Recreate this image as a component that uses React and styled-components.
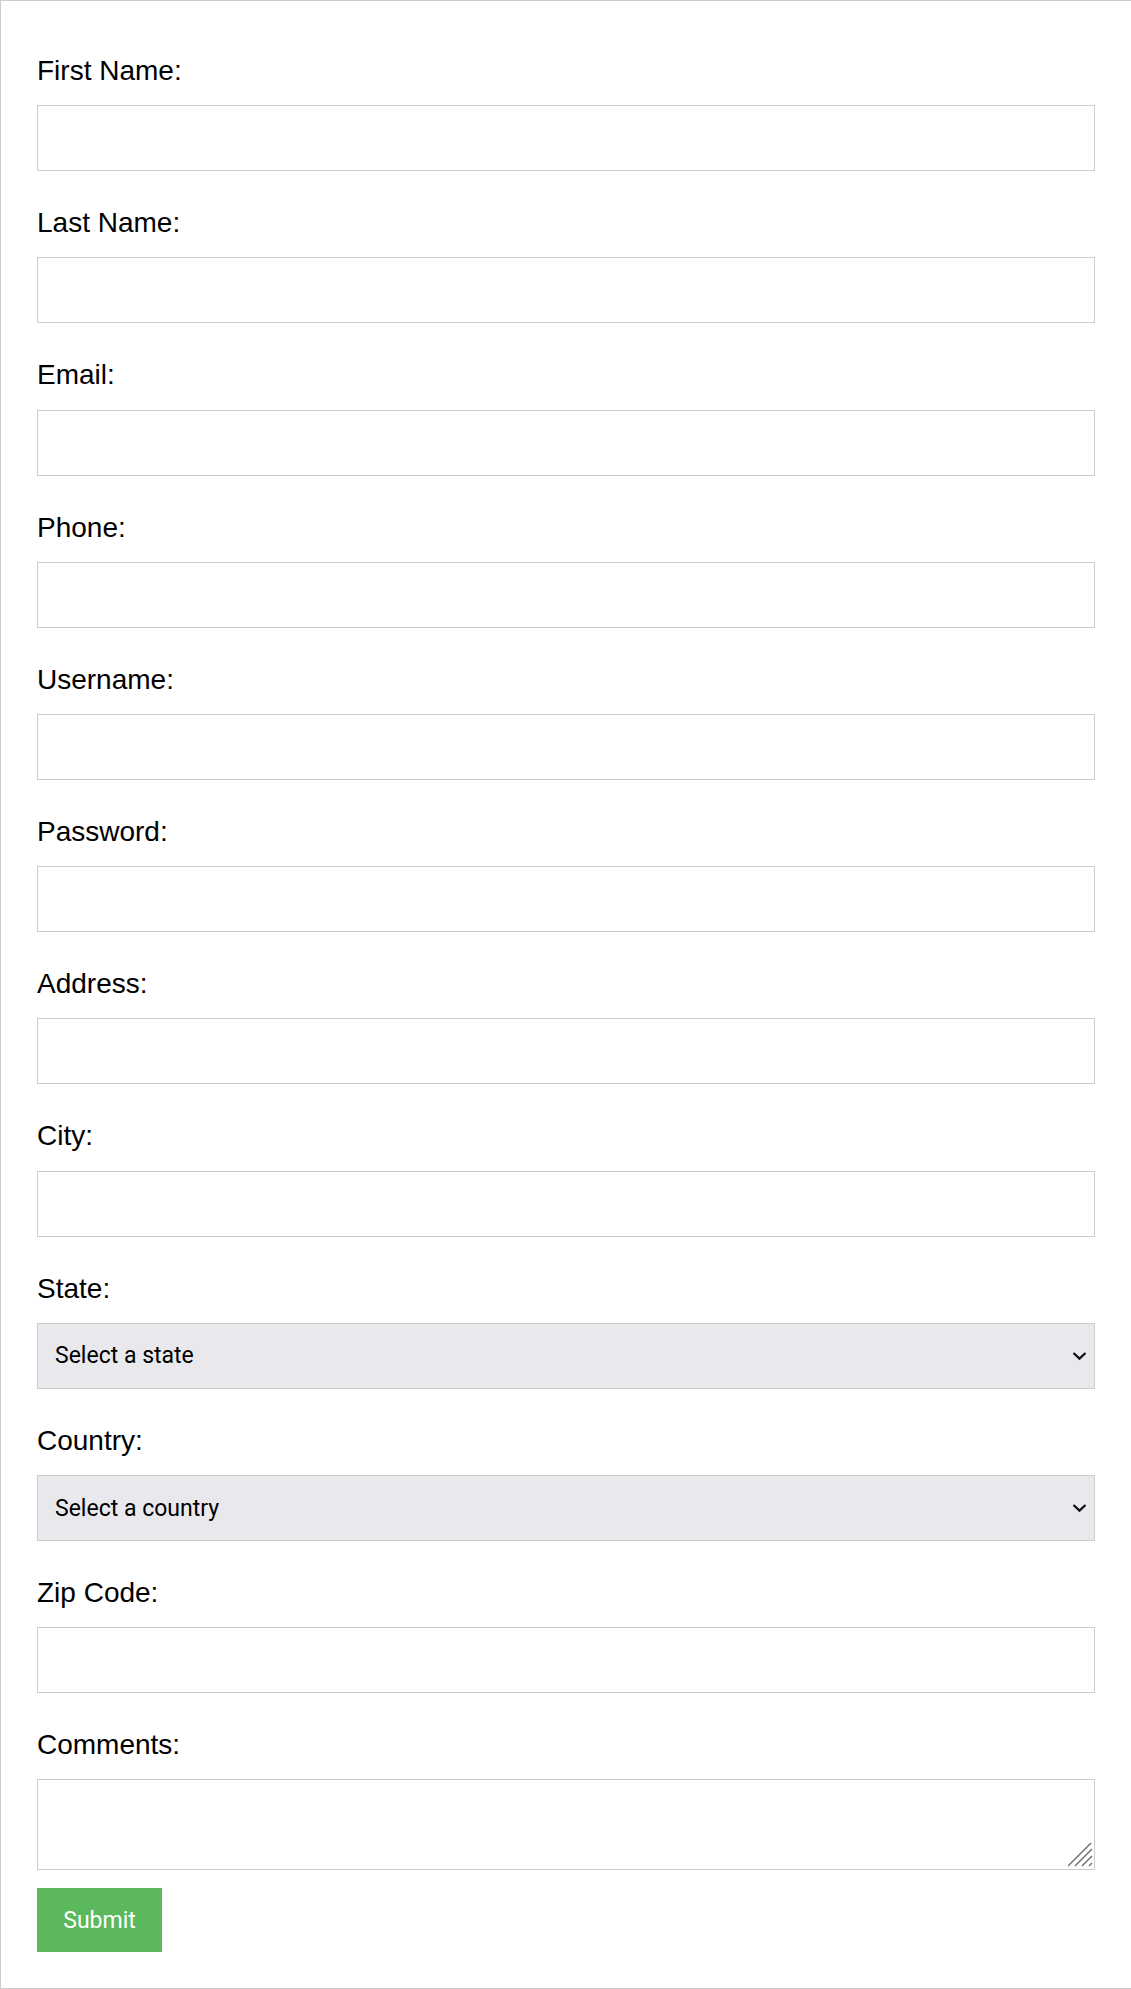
import React from "react";
import styled, { createGlobalStyle } from "styled-components";

const fields = [
  { name: "firstName", label: "First Name:", type: "text" },
  { name: "lastName", label: "Last Name:", type: "text" },
  { name: "email", label: "Email:", type: "email" },
  { name: "phone", label: "Phone:", type: "tel" },
  { name: "username", label: "Username:", type: "text" },
  { name: "password", label: "Password:", type: "password" },
  { name: "address", label: "Address:", type: "text" },
  { name: "city", label: "City:", type: "text" },
  { name: "state", label: "State:", select: "Select a state" },
  { name: "country", label: "Country:", select: "Select a country" },
  { name: "zip", label: "Zip Code:", type: "text" },
];

const App = () => {
  return (
    <>
      <GlobalStyle />
      <Wrapper>
        <Form onSubmit={(e) => e.preventDefault()}>
          {fields.map((field) => (
            <FormGroup key={field.name}>
              <FormLabel htmlFor={field.name}>{field.label}</FormLabel>
              {field.select ? (
                <FieldContainer>
                  <Select id={field.name} defaultValue="">
                    <option value="">{field.select}</option>
                  </Select>
                  <Chevron width="15" height="9" viewBox="0 0 15 9">
                    <path
                      d="M1.5 1.5 L7.5 7.2 L13.5 1.5"
                      fill="none"
                      stroke="#111"
                      strokeWidth="2.3"
                    />
                  </Chevron>
                </FieldContainer>
              ) : (
                <Input id={field.name} type={field.type} />
              )}
            </FormGroup>
          ))}
          <FormGroup>
            <FormLabel htmlFor="comments">Comments:</FormLabel>
            <FieldContainer>
              <TextArea id="comments" />
              {/* grip drawn over the corner, like the reference's resize handle */}
              <ResizeGrip width="26" height="26" viewBox="0 0 26 26">
                <g stroke="#6e6e6e" strokeWidth="1.4" fill="none">
                  <path d="M0 23 L24 -1" />
                  <path d="M7 23 L24 6" />
                  <path d="M14 23 L24 13" />
                  <path d="M21 23 L24 20" />
                </g>
              </ResizeGrip>
            </FieldContainer>
          </FormGroup>
          <SubmitButton type="submit">Submit</SubmitButton>
        </Form>
      </Wrapper>
    </>
  );
};

const GlobalStyle = createGlobalStyle`
  html, body {
    margin: 0;
    overflow-x: hidden;
    background: #fff;
  }
`;

const Wrapper = styled.div`
  border: 1px solid #cccccc;
  box-sizing: border-box;
  padding: 36px;
  width: calc(100% + 1px);
`;

const Form = styled.form`
  display: flex;
  flex-direction: column;
  align-items: flex-start;
`;

const FormGroup = styled.div`
  align-self: stretch;
  margin-bottom: 18px;
`;

const FormLabel = styled.label`
  color: #000;
  display: block;
  font-family: "Liberation Sans", Arial, sans-serif;
  font-size: 28px;
  line-height: 32.2px;
  margin: 18px 0;
`;

const Input = styled.input`
  background: #fff;
  border: 1px solid #cccccc;
  border-radius: 0;
  box-sizing: border-box;
  display: block;
  font-family: "Liberation Sans", Arial, sans-serif;
  font-size: 23px;
  height: 66px;
  margin: 0;
  padding: 0 16px;
  width: 100%;
  outline: none;
`;

const FieldContainer = styled.div`
  position: relative;
`;

const Select = styled.select`
  appearance: none;
  background: #e9e9ed;
  border: 1px solid #cccccc;
  border-radius: 0;
  box-sizing: border-box;
  color: #000;
  display: block;
  font-family: Roboto, sans-serif;
  font-size: 23px;
  height: 66px;
  margin: 0;
  padding: 0 40px 0 17px;
  width: 100%;
  outline: none;
`;

const Chevron = styled.svg`
  pointer-events: none;
  position: absolute;
  right: 8px;
  top: 50%;
  transform: translateY(-50%);
`;

const TextArea = styled.textarea`
  background: #fff;
  border: 1px solid #cccccc;
  border-radius: 0;
  box-sizing: border-box;
  display: block;
  font-family: "Liberation Sans", Arial, sans-serif;
  font-size: 23px;
  height: 91px;
  margin: 0;
  padding: 8px 16px;
  resize: none;
  width: 100%;
  outline: none;
`;

const ResizeGrip = styled.svg`
  pointer-events: none;
  position: absolute;
  right: 1px;
  bottom: 1px;
`;

const SubmitButton = styled.button`
  background: #5cb85c;
  border: none;
  border-radius: 0;
  color: #fff;
  cursor: pointer;
  font-family: Roboto, sans-serif;
  font-size: 23px;
  height: 64px;
  margin: 0;
  padding: 0;
  width: 125px;
`;

export default App;
